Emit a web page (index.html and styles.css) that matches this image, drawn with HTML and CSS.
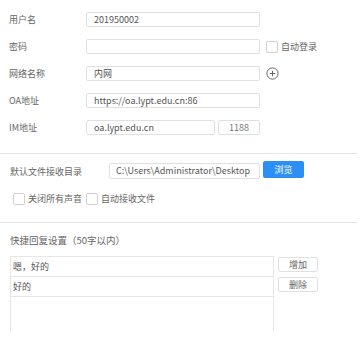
FILE: index.html
```html
<!DOCTYPE html>
<html lang="zh-CN">
<head>
    <meta charset="UTF-8">
    <meta name="viewport" content="width=device-width, initial-scale=1.0">
    <title>设置</title>
    <link rel="stylesheet" href="styles.css">
</head>
<body>
    <div class="panel">
        <div class="section account">
            <div class="row">
                <span class="label">用户名</span>
                <span class="field wide">201950002</span>
            </div>
            <div class="row">
                <span class="label">密码</span>
                <span class="field wide"></span>
                <span class="check"><span class="box"></span>自动登录</span>
            </div>
            <div class="row">
                <span class="label">网络名称</span>
                <span class="field wide">内网</span>
                <svg class="plus" width="13" height="13" viewBox="0 0 13 13">
                    <circle cx="6.5" cy="6.5" r="5.6" fill="none" stroke="#666" stroke-width="1"/>
                    <path d="M6.5 3.8v5.4M3.8 6.5h5.4" stroke="#666" stroke-width="1"/>
                </svg>
            </div>
            <div class="row">
                <span class="label">OA地址</span>
                <span class="field wide">https://oa.lypt.edu.cn:86</span>
            </div>
            <div class="row">
                <span class="label">IM地址</span>
                <span class="field host">oa.lypt.edu.cn</span>
                <span class="field port">1188</span>
            </div>
        </div>

        <div class="section files">
            <div class="row">
                <span class="label dir">默认文件接收目录</span>
                <span class="field path">C:\Users\Administrator\Desktop</span>
                <span class="btn primary">浏览</span>
            </div>
            <div class="row options">
                <span class="check"><span class="box"></span>关闭所有声音</span>
                <span class="check"><span class="box"></span>自动接收文件</span>
            </div>
        </div>

        <div class="section replies">
            <div class="title">快捷回复设置（50字以内）</div>
            <div class="reply-area">
                <div class="reply-list">
                    <div class="reply">嗯，好的</div>
                    <div class="reply">好的</div>
                </div>
                <div class="reply-actions">
                    <span class="btn">增加</span>
                    <span class="btn">删除</span>
                </div>
            </div>
        </div>
    </div>
</body>
</html>
```

FILE: styles.css
```css
body { margin: 0; background: #fff; font-family: "Noto Sans CJK SC", "Noto Sans", sans-serif; font-size: 9px; color: #555; }
.panel { width: 357px; }
.section { border-bottom: 1px solid #e6e6e6; }
.row { display: flex; align-items: center; }
.label { color: #666; }
.field { box-sizing: border-box; height: 15px; line-height: 13px; border: 1px solid #e0e0e0; border-radius: 2px; padding: 0 7px; color: #555; white-space: nowrap; overflow: hidden; }

.account { display: flex; flex-direction: column; gap: 12px; padding: 12px 0 18px 9px; }
.account .label { width: 77px; }
.wide { width: 174px; }
.host { width: 129px; }
.port { width: 42px; margin-left: 3px; text-align: center; color: #777; }
.plus { margin-left: 6px; }

.check { display: flex; align-items: center; color: #666; }
.box { box-sizing: border-box; width: 12px; height: 12px; border: 1px solid #d0d0d0; border-radius: 2px; margin-right: 3px; }
.account .check { margin-left: 6px; }

.files { padding: 9px 0 17px 10px; }
.dir { width: 99px; }
.path { width: 151px; height: 16px; line-height: 14px; padding: 0 6px; color: #555; }
.btn { box-sizing: border-box; display: flex; align-items: center; justify-content: center; width: 40px; height: 15px; border: 1px solid #e0e0e0; border-radius: 2px; color: #666; background: #fff; }
.btn.primary { width: 41px; height: 17px; margin-left: 3px; margin-top: -3px; border: none; background: #2b8ff6; color: #fff; }
.options { gap: 4px; margin-top: 13px; padding-left: 3px; }

.replies { border-bottom: none; padding: 9px 0 0 10px; }
.title { font-size: 9.5px; color: #666; line-height: 16px; }
.reply-area { display: flex; margin-top: 8px; }
.reply-list { box-sizing: border-box; width: 264px; height: 75px; border: 1px solid #e6e6e6; border-bottom: none; }
.reply { box-sizing: border-box; height: 20px; line-height: 19px; padding-left: 2px; border-bottom: 1px solid #e6e6e6; color: #555; }
.reply-actions { display: flex; flex-direction: column; gap: 5px; margin-left: 4px; padding-top: 1px; }
```
